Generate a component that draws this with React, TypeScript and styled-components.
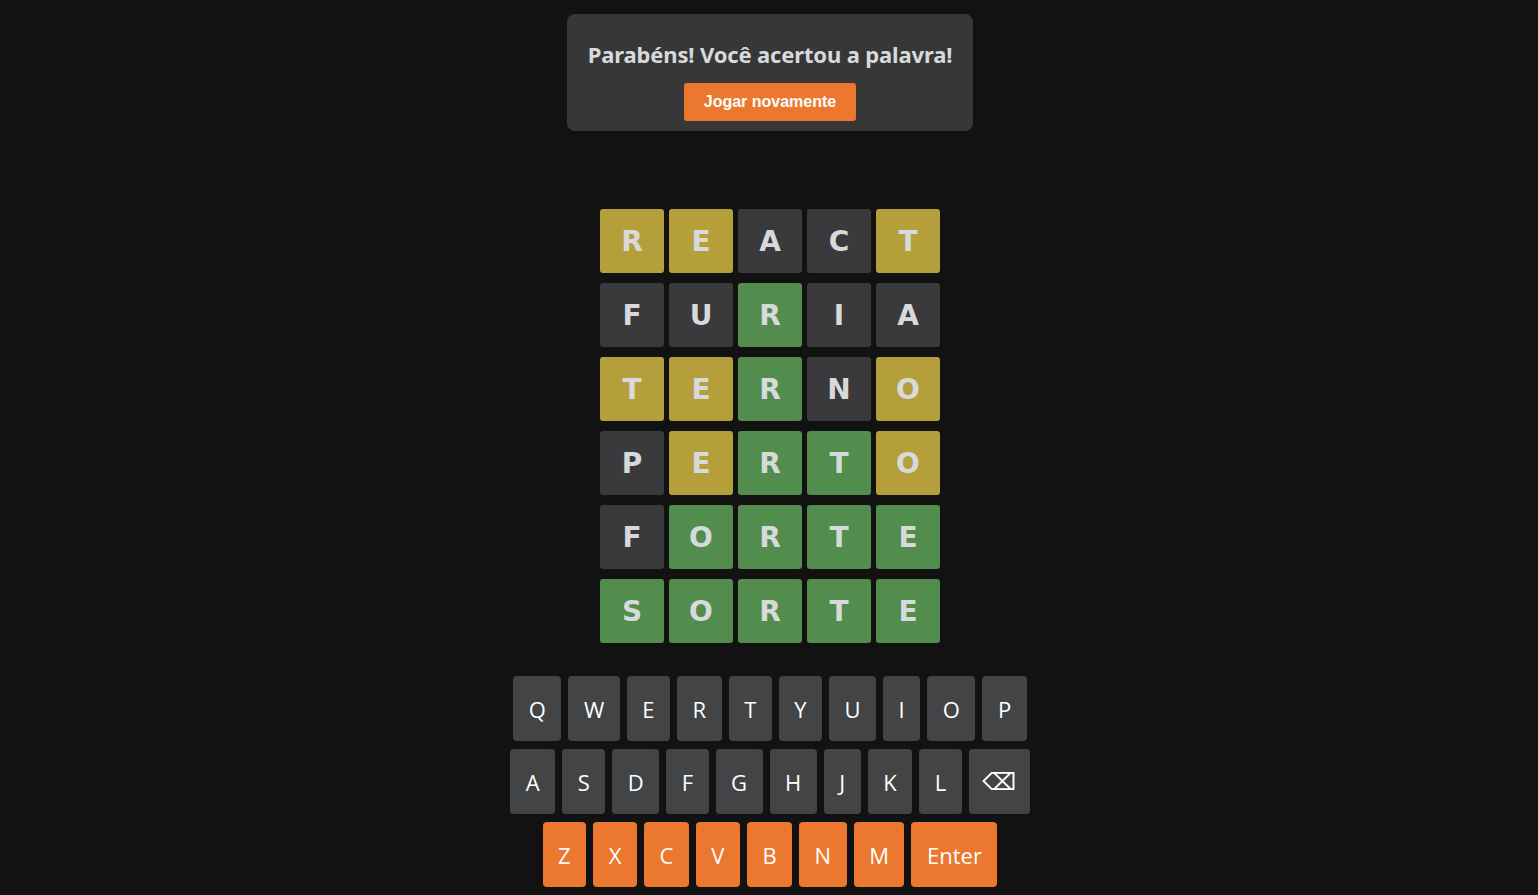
import React from 'react';
import styled, { createGlobalStyle } from 'styled-components';

type TileState = 'correct' | 'present' | 'absent';

const guesses: { word: string; states: TileState[] }[] = [
  { word: 'REACT', states: ['present', 'present', 'absent', 'absent', 'present'] },
  { word: 'FURIA', states: ['absent', 'absent', 'correct', 'absent', 'absent'] },
  { word: 'TERNO', states: ['present', 'present', 'correct', 'absent', 'present'] },
  { word: 'PERTO', states: ['absent', 'present', 'correct', 'correct', 'present'] },
  { word: 'FORTE', states: ['absent', 'correct', 'correct', 'correct', 'correct'] },
  { word: 'SORTE', states: ['correct', 'correct', 'correct', 'correct', 'correct'] },
];

const keyRows: { label: string; used?: boolean }[][] = [
  'QWERTYUIOP'.split('').map(label => ({ label })),
  [...'ASDFGHJKL'.split('').map(label => ({ label })), { label: '⌫' }],
  [...'ZXCVBNM'.split('').map(label => ({ label, used: true })), { label: 'Enter', used: true }],
];

const tileColors: Record<TileState, string> = {
  correct: '#538d4e',
  present: '#b59f3b',
  absent: '#3a3a3c',
};

const GlobalStyle = createGlobalStyle`
  html, body {
    margin: 0;
    padding: 0;
    background: #121212;
  }
  body {
    font-family: 'Open Sans', 'Noto Sans', sans-serif;
  }
`;

const Page = styled.main`
  min-height: 895px;
  display: flex;
  flex-direction: column;
  align-items: center;
  padding: 14px 0 0 2px;
  box-sizing: border-box;
`;

const Banner = styled.div`
  width: 406px;
  box-sizing: border-box;
  padding: 22px 20px 10px;
  background: #373737;
  border-radius: 8px;
  display: flex;
  flex-direction: column;
  align-items: center;
`;

const Title = styled.h2`
  margin: 0 0 11px;
  font-family: 'Noto Sans', sans-serif;
  font-weight: 700;
  font-size: 22px;
  line-height: 36px;
  color: #d7dadc;
  letter-spacing: -0.15px;
`;

const PlayAgain = styled.button`
  width: 172px;
  height: 38px;
  border: none;
  border-radius: 3px;
  background: #ec772e;
  color: #fff;
  font-family: 'Liberation Sans', Arial, sans-serif;
  font-weight: 700;
  font-size: 16px;
  cursor: pointer;
`;

const Board = styled.div`
  margin-top: 78px;
  display: grid;
  grid-template-columns: repeat(5, 64px);
  grid-auto-rows: 64px;
  column-gap: 5px;
  row-gap: 10px;
`;

const Tile = styled.div<{ $state: TileState }>`
  display: flex;
  align-items: center;
  justify-content: center;
  border-radius: 3px;
  background: ${p => tileColors[p.$state]};
  color: #d7dadc;
  font-family: 'DejaVu Sans', sans-serif;
  font-weight: 700;
  font-size: 28px;
`;

const Keyboard = styled.div`
  margin-top: 33px;
  display: flex;
  flex-direction: column;
  align-items: center;
  gap: 8px;
`;

const KeyRow = styled.div`
  display: flex;
  gap: 7px;
`;

const Key = styled.button<{ $used?: boolean }>`
  height: 65px;
  padding: 0 15.5px;
  border: none;
  border-radius: 4px;
  background: ${p => (p.$used ? '#ec772e' : '#434446')};
  color: #fff;
  font-family: 'Open Sans', sans-serif;
  font-size: 22px;
  display: flex;
  align-items: center;
  justify-content: center;
  cursor: pointer;
`;

const BackspaceKey = styled(Key)`
  width: 61px;
  font-family: 'DejaVu Sans', sans-serif;
  font-size: 24px;
`;

export default function App() {
  return (
    <>
      <GlobalStyle />
      <Page>
        <Banner>
          <Title>Parabéns! Você acertou a palavra!</Title>
          <PlayAgain>Jogar novamente</PlayAgain>
        </Banner>
        <Board>
          {guesses.map((g, r) =>
            g.word.split('').map((ch, c) => (
              <Tile key={`${r}-${c}`} $state={g.states[c]}>
                {ch}
              </Tile>
            ))
          )}
        </Board>
        <Keyboard>
          {keyRows.map((row, i) => (
            <KeyRow key={i}>
              {row.map(k =>
                k.label === '⌫' ? (
                  <BackspaceKey key={k.label}>{k.label}</BackspaceKey>
                ) : (
                  <Key key={k.label} $used={k.used}>
                    {k.label}
                  </Key>
                )
              )}
            </KeyRow>
          ))}
        </Keyboard>
      </Page>
    </>
  );
}
